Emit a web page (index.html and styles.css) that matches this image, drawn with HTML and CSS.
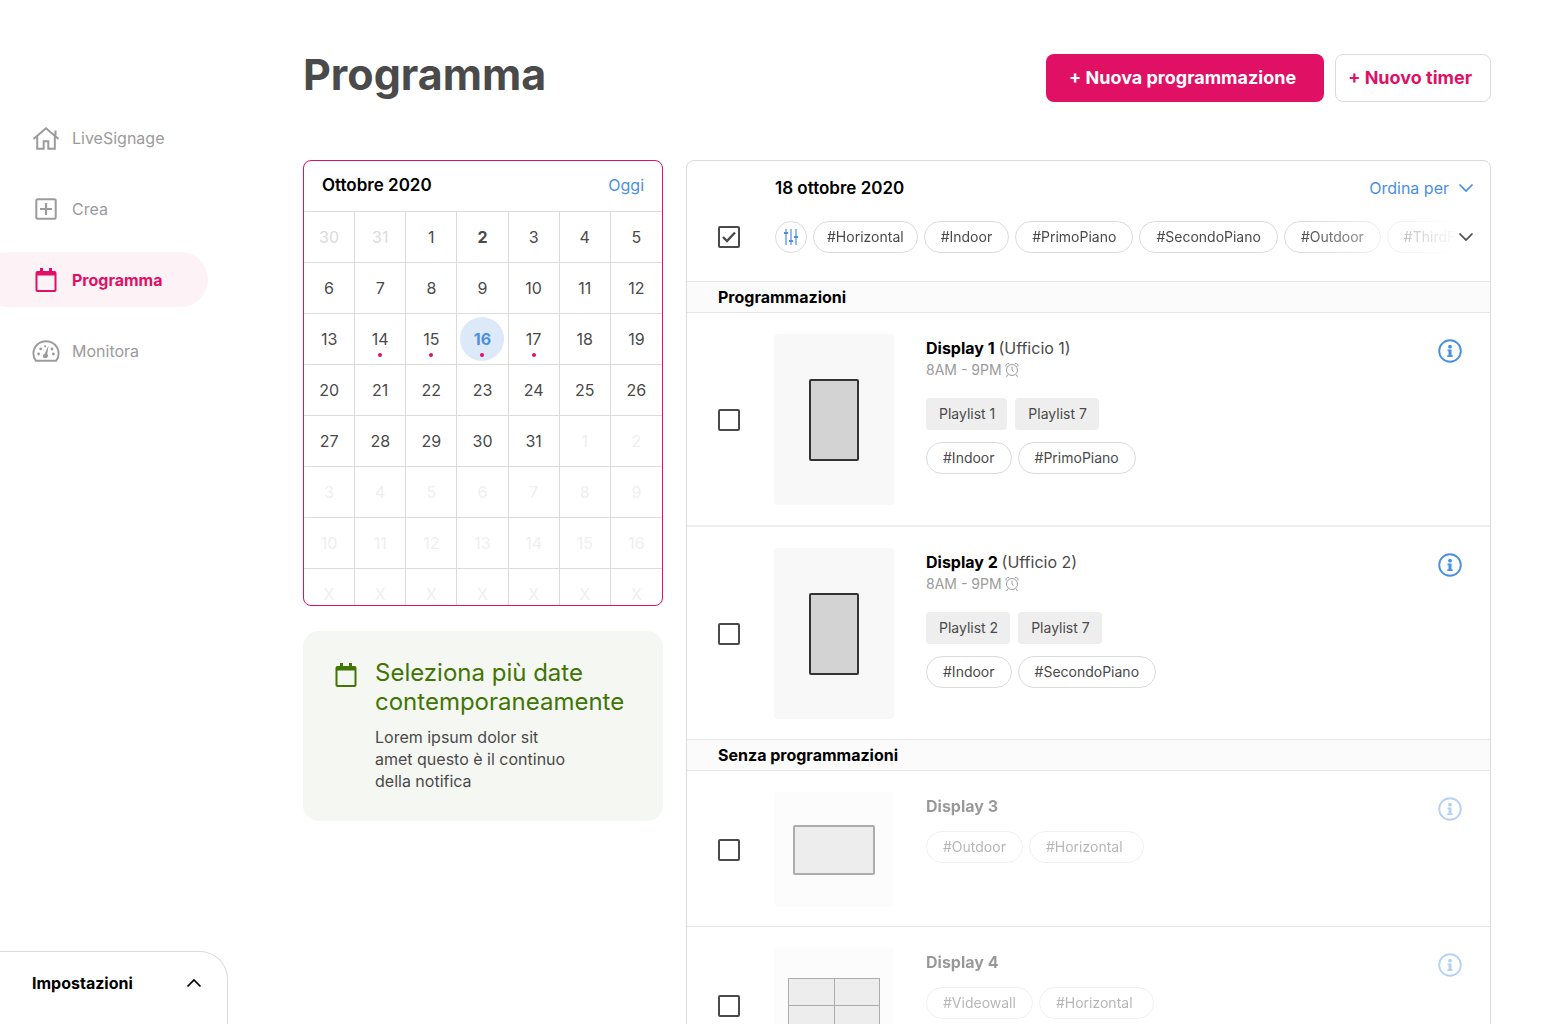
FILE: index.html
```html
<!DOCTYPE html>
<html lang="it">
<head>
<meta charset="utf-8">
<meta name="viewport" content="width=device-width, initial-scale=1">
<title>Programma</title>
<link rel="stylesheet" href="styles.css">
</head>
<body>
<svg class="sprite" aria-hidden="true">
  <symbol id="i-calendar" viewBox="-2 -1 28 28">
    <path d="M6 1h3v3h6V1h3v3h2.500a2 2 0 0 1 2 2v17a2 2 0 0 1-2 2h-17a2 2 0 0 1-2-2V6a2 2 0 0 1 2-2H6zM3.500 8.500V23h17V8.500z" fill="currentColor" fill-rule="evenodd"/>
  </symbol>
  <symbol id="i-info" viewBox="0 0 24 24">
    <circle cx="12" cy="12" r="10.800" fill="none" stroke="currentColor" stroke-width="1.900"/>
    <circle cx="12" cy="7.700" r="1.900" fill="currentColor"/>
    <path d="M9.500 10.500h4v5.700h1.200v1.700H9.300v-1.700h1.200v-4h-1z" fill="currentColor"/>
  </symbol>
  <symbol id="i-alarm" viewBox="0 0 14 16">
    <g fill="none" stroke="currentColor" stroke-width="1"><circle cx="7" cy="8" r="5.500"/><path d="M7 4.500V8l1.500 1.800M3 12.500 1.500 15M11 12.500l1.500 2.500M1 4.500C.500 2.500 2 1 4 1.500M13 4.500c.500-2-1-3.500-3-3"/></g>
  </symbol>
  <symbol id="i-chevron" viewBox="0 0 16 10">
    <path d="m1.500 1.500 6.500 6.500 6.500-6.500" fill="none" stroke="currentColor" stroke-width="1.700"/>
  </symbol>
</svg>
<div class="app">
  <aside class="sidebar">
    <nav class="nav">
      <a class="nav-item" href="#livesignage">
        <svg class="nav-icon" viewBox="0 0 28 28"><path d="M1.500 15 14 4.200 26.500 15M5.200 12.500v12.300h6.500v-7.500h4.600v7.500h6.500V12.500M23.500 11.500V6.500" fill="none" stroke="currentColor" stroke-width="2"/></svg>
        LiveSignage
      </a>
      <a class="nav-item" href="#crea">
        <svg class="nav-icon" viewBox="0 0 28 28"><rect x="4.300" y="4.300" width="19.400" height="19.400" rx="1.500" fill="none" stroke="currentColor" stroke-width="2"/><path d="M14 8v12M8 14h12" stroke="currentColor" stroke-width="2.200"/></svg>
        Crea
      </a>
      <a class="nav-item nav-item-active" href="#programma" aria-current="page">
        <svg class="nav-icon"><use href="#i-calendar"/></svg>
        Programma
      </a>
      <a class="nav-item" href="#monitora">
        <svg class="nav-icon" viewBox="0 0 28 28"><path d="M3.800 23.700C2.300 21.800 1.400 19.300 1.400 16.500 1.400 9.500 7 4.200 14 4.200s12.600 5.300 12.600 12.300c0 2.800-.900 5.300-2.400 7.200z" fill="none" stroke="currentColor" stroke-width="1.900"/><path d="M16.600 8.500 15.300 17a2.600 2.600 0 0 1-.500 4h-3.200a2.500 2.500 0 0 1 1-4.200z" fill="currentColor"/><g fill="currentColor"><circle cx="6.600" cy="17" r="1.400"/><circle cx="8.700" cy="11.800" r="1.400"/><circle cx="21.400" cy="17" r="1.400"/><circle cx="20" cy="12" r="1.400"/><circle cx="13.200" cy="9.300" r="1.100"/></g></svg>
        Monitora
      </a>
    </nav>
    <button class="settings" type="button">
      Impostazioni
      <svg class="chevron chevron-up"><use href="#i-chevron"/></svg>
    </button>
  </aside>

  <main class="main">
    <header class="page-head">
      <h1 class="page-title">Programma</h1>
      <div class="actions">
        <button class="btn btn-primary" type="button">+ Nuova programmazione</button>
        <button class="btn btn-outline" type="button">+ Nuovo timer</button>
      </div>
    </header>

    <div class="columns">
      <div class="side-col">
        <section class="calendar">
          <div class="calendar-head">
            <h2 class="heading">Ottobre 2020</h2>
            <a class="link" href="#oggi">Oggi</a>
          </div>
          <table class="days">
            <tbody>
              <tr><td class="past">30</td><td class="past">31</td><td>1</td><td class="strong">2</td><td>3</td><td>4</td><td>5</td></tr>
              <tr><td>6</td><td>7</td><td>8</td><td>9</td><td>10</td><td>11</td><td>12</td></tr>
              <tr><td>13</td><td><span class="day event">14</span></td><td><span class="day event">15</span></td><td><span class="day event selected">16</span></td><td><span class="day event">17</span></td><td>18</td><td>19</td></tr>
              <tr><td>20</td><td>21</td><td>22</td><td>23</td><td>24</td><td>25</td><td>26</td></tr>
              <tr><td>27</td><td>28</td><td>29</td><td>30</td><td>31</td><td class="next">1</td><td class="next">2</td></tr>
              <tr class="next"><td>3</td><td>4</td><td>5</td><td>6</td><td>7</td><td>8</td><td>9</td></tr>
              <tr class="next"><td>10</td><td>11</td><td>12</td><td>13</td><td>14</td><td>15</td><td>16</td></tr>
              <tr class="next"><td>X</td><td>X</td><td>X</td><td>X</td><td>X</td><td>X</td><td>X</td></tr>
            </tbody>
          </table>
        </section>

        <section class="notice">
          <svg class="notice-icon"><use href="#i-calendar"/></svg>
          <div class="notice-body">
            <h2 class="notice-title">Seleziona più date contemporaneamente</h2>
            <p class="notice-text">Lorem ipsum dolor sit amet questo è il continuo della notifica</p>
          </div>
        </section>
      </div>

      <section class="panel">
        <div class="panel-head">
          <div class="panel-top">
            <h2 class="heading">18 ottobre 2020</h2>
            <button class="sort" type="button">Ordina per <svg class="chevron"><use href="#i-chevron"/></svg></button>
          </div>
          <div class="filters">
            <input class="check" type="checkbox" checked aria-label="Seleziona tutti">
            <div class="filter-list">
              <button class="filter-btn" type="button" aria-label="Filtri">
                <svg class="filter-icon" viewBox="0 0 16 16"><path d="M3 0v16M8 0v16M13 0v16" stroke="currentColor" stroke-width="1.600" opacity=".75"/><path d="M1 4h4M6 12h4M11 8h4" stroke="currentColor" stroke-width="2"/></svg>
              </button>
              <button class="tag tag-tight" type="button">#Horizontal</button>
              <button class="tag" type="button">#Indoor</button>
              <button class="tag" type="button">#PrimoPiano</button>
              <button class="tag" type="button">#SecondoPiano</button>
              <button class="tag" type="button">#Outdoor</button>
              <button class="tag" type="button">#ThirdFloor</button>
            </div>
            <button class="more" type="button" aria-label="Altri filtri"><svg class="chevron"><use href="#i-chevron"/></svg></button>
          </div>
        </div>

        <h3 class="group">Programmazioni</h3>
        <article class="row row-divided">
          <input class="check" type="checkbox" aria-label="Display 1">
          <div class="thumb thumb-tall"><div class="screen screen-portrait"></div></div>
          <div class="details">
            <h4 class="name">Display 1 <span class="place">(Ufficio 1)</span></h4>
            <p class="time">8AM - 9PM <svg class="alarm"><use href="#i-alarm"/></svg></p>
            <div class="playlists"><span class="playlist">Playlist 1</span><span class="playlist">Playlist 7</span></div>
            <div class="tags"><span class="tag">#Indoor</span><span class="tag">#PrimoPiano</span></div>
          </div>
          <button class="info" type="button" aria-label="Informazioni"><svg class="info-icon"><use href="#i-info"/></svg></button>
        </article>
        <article class="row">
          <input class="check" type="checkbox" aria-label="Display 2">
          <div class="thumb thumb-tall"><div class="screen screen-portrait"></div></div>
          <div class="details">
            <h4 class="name">Display 2 <span class="place">(Ufficio 2)</span></h4>
            <p class="time">8AM - 9PM <svg class="alarm"><use href="#i-alarm"/></svg></p>
            <div class="playlists"><span class="playlist">Playlist 2</span><span class="playlist">Playlist 7</span></div>
            <div class="tags"><span class="tag">#Indoor</span><span class="tag">#SecondoPiano</span></div>
          </div>
          <button class="info" type="button" aria-label="Informazioni"><svg class="info-icon"><use href="#i-info"/></svg></button>
        </article>

        <h3 class="group">Senza programmazioni</h3>
        <article class="row row-muted">
          <input class="check" type="checkbox" aria-label="Display 3">
          <div class="thumb"><div class="screen screen-landscape"></div></div>
          <div class="details">
            <h4 class="name">Display 3</h4>
            <div class="tags"><span class="tag">#Outdoor</span><span class="tag tag-wide">#Horizontal</span></div>
          </div>
          <button class="info" type="button" aria-label="Informazioni"><svg class="info-icon"><use href="#i-info"/></svg></button>
        </article>
        <article class="row row-muted">
          <input class="check" type="checkbox" aria-label="Display 4">
          <div class="thumb"><div class="wall"><i></i><i></i><i></i><i></i></div></div>
          <div class="details">
            <h4 class="name">Display 4</h4>
            <div class="tags"><span class="tag">#Videowall</span><span class="tag tag-wide">#Horizontal</span></div>
          </div>
          <button class="info" type="button" aria-label="Informazioni"><svg class="info-icon"><use href="#i-info"/></svg></button>
        </article>
      </section>
    </div>
  </main>
</div>
</body>
</html>
```
FILE: styles.css
```css
:root {
  --pink: #e01065;
  --blue: #4a90e2;
  --text: #4a4a4a;
  --grey: #9b9b9b;
  --line: #dbdbdb;
}

* { box-sizing: border-box; }

body {
  margin: 0;
  font-family: Inter, "Liberation Sans", sans-serif;
  font-size: 16px;
  line-height: 22px;
  color: var(--text);
  background: #fff;
}

h1, h2, h3, h4, p { margin: 0; }
a { text-decoration: none; }

button {
  padding: 0;
  border: 0;
  background: none;
  font: inherit;
  color: inherit;
  cursor: pointer;
}

.sprite { position: absolute; width: 0; height: 0; }

.app { display: flex; height: 100vh; overflow: hidden; }

/* Sidebar */
.sidebar {
  flex: 0 0 228px;
  display: flex;
  flex-direction: column;
  justify-content: space-between;
  padding-top: 110px;
}

.nav {
  display: flex;
  flex-direction: column;
  gap: 16px;
  margin: 0 20px 0 -20px;
}

.nav-item {
  display: flex;
  align-items: center;
  gap: 12px;
  height: 55px;
  padding-left: 52px;
  border-radius: 28px;
  color: var(--grey);
}

.nav-item-active { background: #fdf2f6; color: var(--pink); font-weight: 700; }
.nav-icon { width: 28px; height: 28px; }

.settings {
  display: flex;
  align-items: flex-start;
  justify-content: space-between;
  height: 73px;
  padding: 20px 25px 0 32px;
  border: solid var(--line);
  border-width: 1px 1px 0 0;
  border-top-right-radius: 28px;
  font-weight: 700;
  color: #000;
}

.chevron { width: 16px; height: 10px; flex: none; }
.chevron-up { margin-top: 6px; transform: rotate(180deg); }

/* Main area */
.main {
  flex: 1;
  min-width: 0;
  padding: 48px 69px 40px 75px;
  overflow-y: auto;
  scrollbar-width: none;
}

.page-head { display: flex; justify-content: space-between; margin-bottom: 58px; }
.page-title { font-size: 43px; line-height: 52px; font-weight: 700; }
.actions { display: flex; gap: 11px; padding-top: 6px; }

.btn {
  height: 48px;
  border-radius: 8px;
  font-size: 18px;
  font-weight: 700;
}

.btn-primary { padding: 0 28px 0 23px; background: var(--pink); color: #fff; }
.btn-outline { padding: 0 18px 0 12px; border: 1px solid var(--line); color: var(--pink); }

.columns { display: flex; align-items: flex-start; gap: 23px; }
.side-col { flex: 0 0 360px; display: flex; flex-direction: column; gap: 25px; }

.heading { font-size: 17px; line-height: 22px; font-weight: 600; color: #000; }
.link { color: var(--blue); }

/* Calendar */
.calendar {
  height: 446px;
  border: 1px solid var(--pink);
  border-radius: 8px;
  overflow: hidden;
}

.calendar-head {
  display: flex;
  justify-content: space-between;
  height: 50px;
  padding: 13px 18px 0;
}

.days {
  width: 100%;
  table-layout: fixed;
  border-collapse: separate;
  border-spacing: 0;
}

.days td {
  height: 51px;
  padding: 0;
  border-top: 1px solid var(--line);
  border-right: 1px solid var(--line);
  text-align: center;
}

.days td:last-child { border-right: 0; }
.days .past { color: var(--line); }
.days .next { color: #efefef; }
.days .strong { font-weight: 700; }

.day {
  display: flex;
  flex-direction: column;
  align-items: center;
  justify-content: center;
  position: relative;
  width: 44px;
  height: 44px;
  margin: 0 auto;
  border-radius: 50%;
}

.event::after {
  content: "";
  position: absolute;
  bottom: 4px;
  width: 4px;
  height: 4px;
  border-radius: 50%;
  background: var(--pink);
}

.selected { background: #dce9f9; color: var(--blue); font-weight: 700; }

/* Notice */
.notice {
  display: flex;
  gap: 15px;
  padding: 27px 32px 29px 29px;
  border-radius: 16px;
  background: #f5f7f2;
}

.notice-icon { flex: none; width: 28px; height: 28px; margin-top: 3px; color: #417505; }
.notice-body { display: flex; flex-direction: column; gap: 10px; }
.notice-title { font-size: 24px; line-height: 29px; font-weight: 400; color: #417505; }
.notice-text { max-width: 200px; }

/* Display list */
.panel {
  flex: 1;
  min-width: 0;
  border: 1px solid var(--line);
  border-radius: 8px;
}

.panel-head {
  display: flex;
  flex-direction: column;
  gap: 22px;
  padding: 16px 16px 28px 31px;
}

.panel-top { display: flex; justify-content: space-between; padding-left: 57px; }
.sort { display: flex; align-items: center; gap: 9px; color: var(--blue); }
.filters { display: flex; align-items: center; }

.filter-list {
  flex: 1;
  min-width: 0;
  display: flex;
  gap: 6px;
  margin-left: 35px;
  overflow: hidden;
  -webkit-mask-image: linear-gradient(to left, transparent, #000 160px);
  mask-image: linear-gradient(to left, transparent, #000 160px);
}

.filter-btn {
  flex: none;
  display: flex;
  align-items: center;
  justify-content: center;
  width: 32px;
  height: 32px;
  border: 1px solid var(--line);
  border-radius: 50%;
  color: var(--blue);
}

.filter-icon { width: 16px; height: 16px; }
.more { display: flex; }

.check {
  appearance: none;
  flex: none;
  width: 22px;
  height: 22px;
  margin: 0;
  border: 2px solid var(--text);
  border-radius: 2px;
}

.check:checked {
  background: url("data:image/svg+xml,%3Csvg xmlns='http://www.w3.org/2000/svg' viewBox='0 0 18 18'%3E%3Cpath d='M3 9l4 4 8-8.500' fill='none' stroke='%234a4a4a' stroke-width='2.400'/%3E%3C/svg%3E") center / 18px no-repeat;
}

.tag {
  flex: none;
  height: 32px;
  padding: 0 16px;
  border: 1px solid var(--line);
  border-radius: 16px;
  font-size: 14px;
  line-height: 30px;
}

.tag-tight { padding: 0 13px; }
.tag-wide { min-width: 115px; }

.group {
  height: 32px;
  padding-left: 31px;
  border: solid #e6e6e6;
  border-width: 1px 0;
  background: #fbfbfb;
  font-size: 16px;
  line-height: 30px;
  font-weight: 700;
  color: #000;
}

.row {
  display: flex;
  align-items: center;
  padding: 21px 28px 20px 31px;
}

.row-divided { border-bottom: 2px solid #efefef; }

.thumb {
  flex: none;
  display: flex;
  align-items: center;
  justify-content: center;
  width: 120px;
  height: 115px;
  margin: 0 32px 0 34px;
  border-radius: 4px;
  background: #f8f8f8;
}

.thumb-tall { height: 171px; }
.screen { border: 2px solid #333; border-radius: 2px; background: #d3d3d3; }
.screen-portrait { width: 50px; height: 82px; }
.screen-landscape { width: 82px; height: 50px; }

.wall {
  display: grid;
  grid-template-columns: 1fr 1fr;
  gap: 1px;
  width: 92px;
  height: 55px;
  padding: 1px;
  background: #333;
}

.wall i { background: #d3d3d3; }

.details { flex: 1; min-width: 0; align-self: flex-start; padding-top: 3px; }
.name { font-size: 16px; line-height: 22px; font-weight: 700; color: #000; }
.place { font-weight: 400; color: var(--text); }
.time { display: flex; align-items: center; gap: 3px; font-size: 14px; color: var(--grey); }
.alarm { width: 14px; height: 16px; }
.playlists { display: flex; gap: 8px; margin: 17px 0 12px; }

.playlist {
  height: 32px;
  padding: 0 12px 0 13px;
  border-radius: 4px;
  background: #eee;
  font-size: 14px;
  line-height: 32px;
}

.tags { display: flex; gap: 6px; }
.info { align-self: flex-start; margin-top: 5px; color: var(--blue); }
.info-icon { display: block; width: 24px; height: 24px; }

.row-muted { padding-bottom: 19px; border-bottom: 1px solid #e6e6e6; }
.row-muted .thumb, .row-muted .name, .row-muted .tags, .row-muted .info { opacity: .4; }
.row-muted .tags { margin-top: 14px; }
```
